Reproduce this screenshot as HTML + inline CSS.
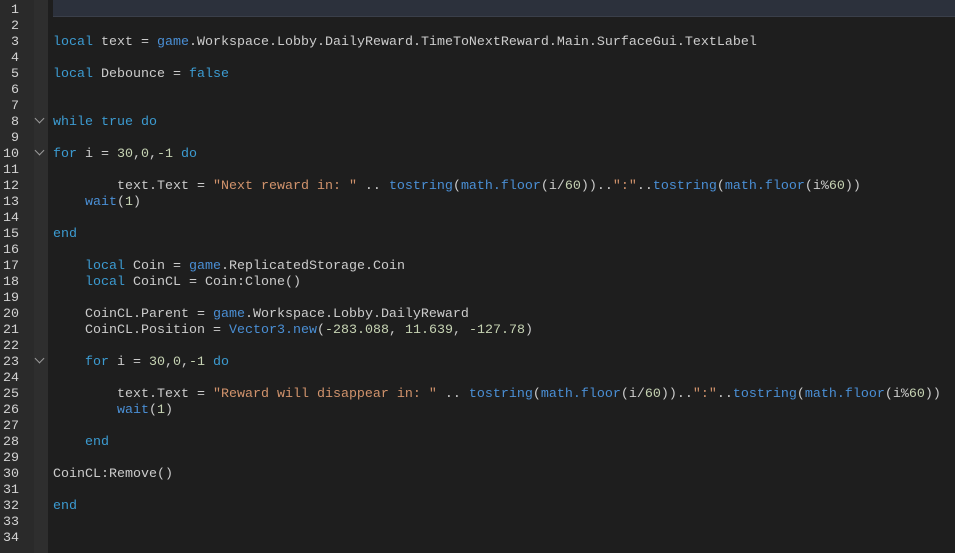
<!DOCTYPE html><html><head><style>
html,body{margin:0;padding:0;background:#1e1e1e;width:955px;height:553px;overflow:hidden}
#g{position:absolute;left:0;top:0;width:34px;height:553px;background:#2a2a2a}
#f{position:absolute;left:34px;top:0;width:14px;height:553px;background:#2e2e2e}
#hl{position:absolute;left:53px;top:0;width:902px;height:16px;background:#2c313c;border-bottom:1px solid #3a3f4a}
.ln,.cl{position:absolute;font-family:"Liberation Mono",monospace;font-size:13.33px;line-height:16px;white-space:pre}
.ln{left:0;width:19px;text-align:right;color:#d4d4d4;top:3px}
.cl{left:53px;top:3px;color:#cccccc}
.k{color:#3c9bd1}.b{color:#4a8fd5}.s{color:#d1936c}.n{color:#c6d3b3}
.fo{position:absolute;left:36px;width:6px;height:6px;border-right:1.3px solid #999;border-bottom:1.3px solid #999;transform:rotate(45deg)}
</style></head><body>
<div id="g"></div><div id="f"></div><div id="hl"></div>
<div class="ln">1
2
3
4
5
6
7
8
9
10
11
12
13
14
15
16
17
18
19
20
21
22
23
24
25
26
27
28
29
30
31
32
33
34</div>
<div class="fo" style="top:115px"></div>
<div class="fo" style="top:147px"></div>
<div class="fo" style="top:355px"></div>
<div class="cl">

<span class="k">local</span> text = <span class="b">game</span>.Workspace.Lobby.DailyReward.TimeToNextReward.Main.SurfaceGui.TextLabel

<span class="k">local</span> Debounce = <span class="k">false</span>


<span class="k">while</span> <span class="k">true</span> <span class="k">do</span>

<span class="k">for</span> i = <span class="n">30</span>,<span class="n">0</span>,<span class="n">-1</span> <span class="k">do</span>

        text.Text = <span class="s">"Next reward in: "</span> .. <span class="b">tostring</span>(<span class="b">math.floor</span>(i/<span class="n">60</span>))..<span class="s">":"</span>..<span class="b">tostring</span>(<span class="b">math.floor</span>(i%<span class="n">60</span>))
    <span class="b">wait</span>(<span class="n">1</span>)

<span class="k">end</span>

    <span class="k">local</span> Coin = <span class="b">game</span>.ReplicatedStorage.Coin
    <span class="k">local</span> CoinCL = Coin:Clone()

    CoinCL.Parent = <span class="b">game</span>.Workspace.Lobby.DailyReward
    CoinCL.Position = <span class="b">Vector3.new</span>(<span class="n">-283.088</span>, <span class="n">11.639</span>, <span class="n">-127.78</span>)

    <span class="k">for</span> i = <span class="n">30</span>,<span class="n">0</span>,<span class="n">-1</span> <span class="k">do</span>

        text.Text = <span class="s">"Reward will disappear in: "</span> .. <span class="b">tostring</span>(<span class="b">math.floor</span>(i/<span class="n">60</span>))..<span class="s">":"</span>..<span class="b">tostring</span>(<span class="b">math.floor</span>(i%<span class="n">60</span>))
        <span class="b">wait</span>(<span class="n">1</span>)

    <span class="k">end</span>

CoinCL:Remove()

<span class="k">end</span>
</div>
</body></html>
